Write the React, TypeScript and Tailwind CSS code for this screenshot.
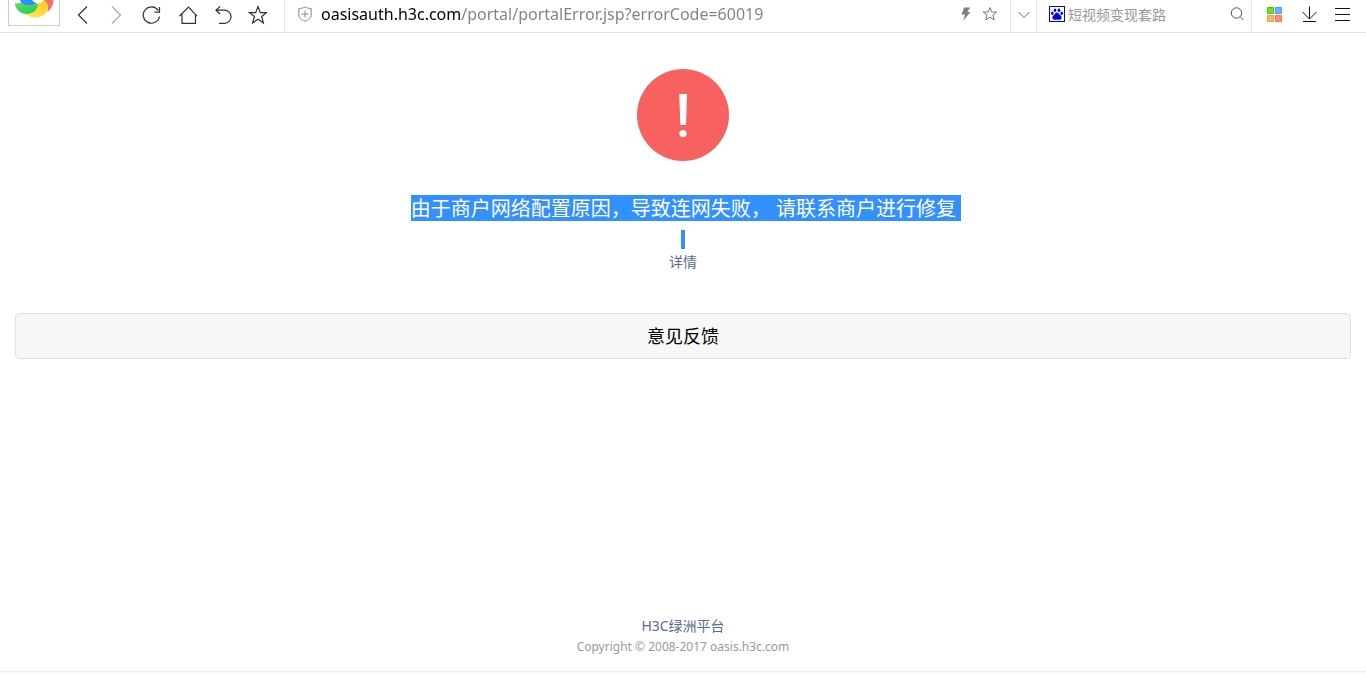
import React, { useState } from "react";

type ToolButtonProps = {
    label: string;
    className?: string;
    children: React.ReactNode;
};

function ToolButton ({ label, className = "text-[#333333]", children }: ToolButtonProps) {
    return (
        <button type="button" aria-label={label} title={label} className={className}>
            <svg viewBox="0 0 20 20" className="block h-5 w-5" fill="none" stroke="currentColor" strokeWidth="1.2">
                {children}
            </svg>
        </button>
    )
}

function BrowserLogo () {
    return (
        <div className="ml-2 flex h-[26px] w-[52px] justify-center border border-t-0 border-[#cccccc]">
            <svg viewBox="0 0 40 20" className="h-5 w-10" role="img" aria-label="Browser">
                <defs>
                    <linearGradient id="green" x1="0" y1="0" x2="1" y2="1">
                        <stop offset="0" stopColor="#5be06b"/>
                        <stop offset="1" stopColor="#22c94f"/>
                    </linearGradient>
                    <linearGradient id="yellow" x1="0" y1="1" x2="1" y2="0">
                        <stop offset="0" stopColor="#ffe566"/>
                        <stop offset="1" stopColor="#ffc91f"/>
                    </linearGradient>
                </defs>
                <path d="M29 0H39.500C39.500 5 37 9 33.500 12C34.500 7 33 3 29 0Z" fill="#ff6b66"/>
                <path d="M28 0H30C35 3 35.500 9 31.500 13.500C26 19 16 19 11 13.500C18 14.500 24 10 24 3Z" fill="url(#yellow)"/>
                <path d="M1 3C4 4.500 6 2 9 2C13 2 15 5 24 4C24 9 20 13.500 13 14C6 14 1 9 1 3Z" fill="url(#green)"/>
                <path d="M6 0C7 3 10 5 14 5C18 5 21 4.500 24 3L22 0Z" fill="#2f8cff"/>
                <circle cx="24" cy="-3" r="6.500" fill="#ffffff"/>
            </svg>
        </div>
    )
}

function AddressBar () {
    const [url, setUrl] = useState("oasisauth.h3c.com/portal/portalError.jsp?errorCode=60019");

    return (
        <div className="flex flex-1 items-center border-l border-[#e0e4ea] px-3">
            <svg viewBox="0 0 16 16" className="mr-2 h-4 w-4" fill="none" stroke="#888888">
                <path d="M8 .8C6.500 2 4 2.500 1.800 2.500V9C1.800 12 4.500 14 8 15.200C11.500 14 14.200 12 14.200 9V2.500C12 2.500 9.500 2 8 .8Z"/>
                <path d="M8 4.500V11.500M4.500 8H11.500"/>
            </svg>
            {/* the host part is darker than the path */}
            <input
                aria-label="Address"
                value={url}
                onChange={e => setUrl(e.target.value)}
                className="h-7 min-w-0 flex-1 bg-linear-to-r from-black from-[141px] to-[#808080] to-[141px] bg-clip-text text-base text-transparent outline-none"
            />
            <div className="flex items-center gap-2">
                <button type="button" aria-label="Speed mode">
                    <svg viewBox="0 0 16 16" className="h-4 w-4" fill="#808080">
                        <path d="M6 1.500H12L9.500 6H12.500L5 15L7 8.500H3.500Z"/>
                    </svg>
                </button>
                <button type="button" aria-label="Bookmark this page">
                    <svg viewBox="0 0 16 16" className="h-4 w-4" fill="none" stroke="#777777">
                        <path d="M8 1.500L9.800 6H14.800L10.900 9L12.300 14L8 11.100L3.700 14L5.100 9L1.200 6H6.200Z"/>
                    </svg>
                </button>
            </div>
        </div>
    )
}

function SearchBox () {
    return (
        <form className="flex w-[215px] items-center border-l border-[#e0e4ea] pr-1.5 pl-3" onSubmit={e => e.preventDefault()}>
            <svg viewBox="0 0 16 16" className="mr-[3px] h-4 w-4 shrink-0" fill="#0000ee">
                <path d="M0 0H16V16H0ZM1 1V15H15V1Z" fillRule="evenodd"/>
                <ellipse cx="3.300" cy="7.200" rx="1.300" ry="1.700"/>
                <ellipse cx="6" cy="4.200" rx="1.300" ry="1.800"/>
                <ellipse cx="10" cy="4.200" rx="1.300" ry="1.800"/>
                <ellipse cx="12.700" cy="7.200" rx="1.300" ry="1.700"/>
                <path d="M8 6.500C9.500 6.500 10 8.300 11.300 9.300C13.300 10.800 12.800 13.800 10.500 13.800C9.500 13.800 9 13.400 8 13.400C7 13.400 6.500 13.800 5.500 13.800C3.200 13.800 2.700 10.800 4.700 9.300C6 8.300 6.500 6.500 8 6.500Z"/>
            </svg>
            <input aria-label="Search" placeholder="短视频变现套路" className="h-7 min-w-0 flex-1 text-sm outline-none placeholder:text-[#999999]"/>
            <button type="submit" aria-label="Search">
                <svg viewBox="0 0 16 16" className="h-4 w-4" fill="none" stroke="#555555">
                    <circle cx="7.500" cy="7" r="5.200"/>
                    <path d="M11.300 10.800L14.500 14"/>
                </svg>
            </button>
        </form>
    )
}

function Toolbar () {
    return (
        <header className="flex h-[33px] border-b border-[#e0e4ea]">
            <div className="flex w-[284px] shrink-0">
                <BrowserLogo/>
                <nav className="flex h-[29px] items-center gap-[15px] pl-3">
                    <ToolButton label="Back"><path d="M15 1.500L6.500 10L15 18.500"/></ToolButton>
                    <ToolButton label="Forward" className="text-[#aaaaaa]"><path d="M5 1.500L13.500 10L5 18.500"/></ToolButton>
                    <ToolButton label="Reload">
                        <path d="M16.300 5.500A8.200 8.200 0 1 0 17.500 11.500M17.500 2V7.200H12.500"/>
                    </ToolButton>
                    <ToolButton label="Home">
                        <path d="M2.500 11L11.500 2L20 11M5 9V18.400H18.500V9"/>
                    </ToolButton>
                    <ToolButton label="Restore tab">
                        <path d="M8 1.500L4 5.200L8 9M4 5.200H12.500A6.500 6.500 0 0 1 12.500 18.300H7"/>
                    </ToolButton>
                    <ToolButton label="Favorites">
                        <path d="M11 1.500L13.300 7.600H19.500L14.600 11.500L16.400 18L11 14.200L5.600 18L7.400 11.500L2.500 7.600H8.700Z"/>
                    </ToolButton>
                </nav>
            </div>
            <div className="flex flex-1 [&>*]:pb-1">
                <AddressBar/>
                <button type="button" aria-label="Show history" className="flex w-[26px] items-center justify-center border-l border-[#e0e4ea]">
                    <svg viewBox="0 0 12 12" className="h-3 w-3" fill="none" stroke="#666666">
                        <path d="M.5 4L6 9.500L11.500 4"/>
                    </svg>
                </button>
                <SearchBox/>
                <div className="flex w-[115px] items-center justify-between border-l border-[#e0e4ea] px-[15px]">
                    <button type="button" aria-label="Extensions">
                        <svg viewBox="0 0 15 15" className="h-[15px] w-[15px]">
                            <path d="M.5 .5H6.500V6.500H.5Z" fill="#76dd26" stroke="#45c800"/>
                            <path d="M8.500 .5H14.500V6.500H8.500Z" fill="#65b7ff" stroke="#4aa3fa"/>
                            <path d="M.5 8.500H6.500V14.500H.5Z" fill="#ffb366" stroke="#ff9d42"/>
                            <path d="M8.500 8.500H14.500V14.500H8.500Z" fill="#ff8f75" stroke="#ff704f"/>
                        </svg>
                    </button>
                    <button type="button" aria-label="Downloads">
                        <svg viewBox="0 0 16 16" className="h-4 w-4" fill="none" stroke="#111111">
                            <path d="M8.500 .5V13M1.500 6L8.500 13L15.500 6M2 15.500H15"/>
                        </svg>
                    </button>
                    <button type="button" aria-label="Menu">
                        <svg viewBox="0 0 16 16" className="h-4 w-4" fill="none" stroke="#111111">
                            <path d="M0 2.500H15M0 8.500H15M0 14.500H15"/>
                        </svg>
                    </button>
                </div>
            </div>
        </header>
    )
}

export default function App () {
    return (
        <div className="flex min-h-screen flex-col bg-white font-['Noto_Sans','Noto_Sans_CJK_SC',sans-serif] text-black">
            <Toolbar/>
            <main className="flex flex-1 flex-col items-center px-[15px] pt-9">
                <svg viewBox="0 0 92 92" className="h-[92px] w-[92px]" role="img" aria-label="Error">
                    <circle cx="46" cy="46" r="46" fill="#f76260"/>
                    <path d="M42.300 25H50L49 56H43.300Z" fill="#ffffff"/>
                    <circle cx="46" cy="64.500" r="3.600" fill="#ffffff"/>
                </svg>
                <h1 className="mt-[34px] ml-1.5 bg-[#3390ff] pt-0.5 text-xl leading-6 whitespace-pre text-white">
                    {"由于商户网络配置原因，导致连网失败， 请联系商户进行修复 "}
                </h1>
                <span className="mt-[9px] h-[19px] w-1 bg-[#3390ff]"/>
                <a href="#detail" className="mt-0.5 text-sm leading-[22px] text-[#576b95]">详情</a>
                <button type="button" className="mt-10 h-[46px] w-full rounded-[5px] border border-[#dfdfdf] bg-[#f7f7f7] text-lg">
                    意见反馈
                </button>
            </main>
            <footer className="flex flex-col items-center pt-9">
                <a href="#oasis" className="text-sm leading-[22px] text-[#576b95]">H3C绿洲平台</a>
                <p className="text-xs leading-5 text-[#999999]">Copyright © 2008-2017 oasis.h3c.com</p>
                <div className="mt-3.5 h-[3px] w-full border-t border-[#eeeeee] bg-[#fafafa]"/>
            </footer>
        </div>
    )
}
